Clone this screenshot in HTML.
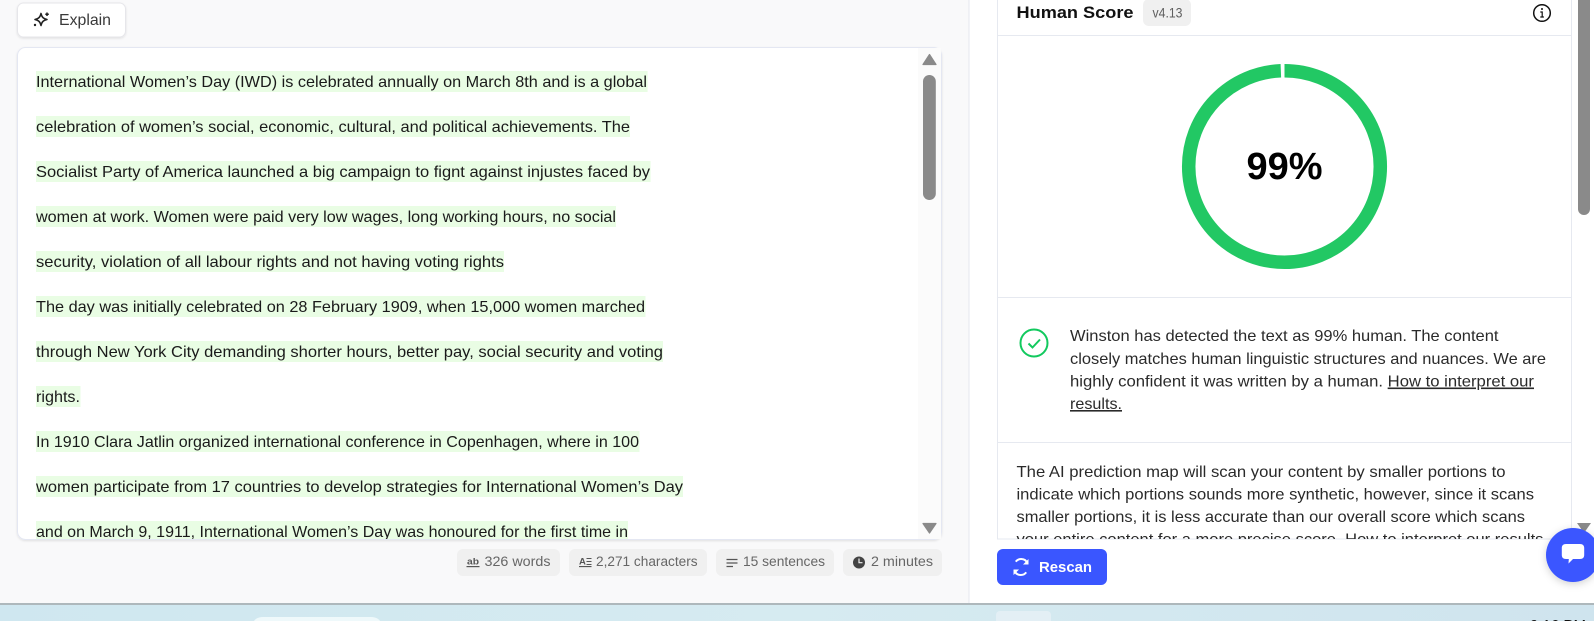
<!DOCTYPE html>
<html><head><meta charset="utf-8"><title>Human Score</title>
<style>
html,body{margin:0;padding:0;width:1594px;height:621px;overflow:hidden;background:#fff}
svg{display:block;font-family:"Liberation Sans",sans-serif}
.l{font-size:16px;fill:#1a1a1a}
.r{font-size:16px;fill:#2a2a2a}
.s{font-size:13.5px;fill:#666}
</style></head><body>
<svg width="1594" height="621" viewBox="0 0 1594 621" xmlns="http://www.w3.org/2000/svg">
<defs>
<clipPath id="c1"><rect x="17" y="47" width="924" height="492"/></clipPath>
<clipPath id="c2"><rect x="998" y="36" width="573" height="503"/></clipPath>
<linearGradient id="tb" x1="0" x2="1" y1="0" y2="0"><stop offset="0" stop-color="#cfe7f0"/><stop offset=".5" stop-color="#d6ebf1"/><stop offset="1" stop-color="#cfe4ee"/></linearGradient>
<filter id="sh" x="-20%" y="-20%" width="140%" height="140%"><feDropShadow dx="0" dy="1" stdDeviation="1" flood-color="#000" flood-opacity=".10"/></filter>
<filter id="sh2" x="-30%" y="-30%" width="160%" height="160%"><feDropShadow dx="0" dy="2" stdDeviation="4" flood-color="#000" flood-opacity=".18"/></filter>
</defs>

<!-- panels -->
<rect width="969" height="603" fill="#f9f9fa"/>
<rect x="968.500" width="1" height="603" fill="#e5e7ef"/>
<rect x="970" width="624" height="603" fill="#fff"/>

<!-- explain button -->
<rect x="17.500" y="3" width="108" height="34" rx="6" fill="#fff" stroke="#e6e6ea" filter="url(#sh)"/>
<path d="M41 13.500c.9 3.800 2.200 5.100 6 6-3.800.9-5.100 2.200-6 6-.9-3.800-2.200-5.100-6-6 3.800-.9 5.100-2.200 6-6z" fill="none" stroke="#222" stroke-width="1.600" stroke-linejoin="round"/>
<path d="M47 12.500v3.500M45.300 14.200h3.500" stroke="#222" stroke-width="1.500"/>
<circle cx="35" cy="25" r="1.200" fill="#222"/>
<text x="59" y="25" font-size="16" fill="#3a3a3a" textLength="52" lengthAdjust="spacingAndGlyphs">Explain</text>

<!-- text card -->
<rect x="17.500" y="47.500" width="924" height="492" rx="8" fill="#fff" stroke="#e4e7f2" filter="url(#sh)"/>
<g clip-path="url(#c1)">
<g fill="#e9fde4">
<rect x="36" y="71" width="611.600" height="21"/>
<rect x="36" y="116" width="594" height="21"/>
<rect x="36" y="161" width="614.600" height="21"/>
<rect x="36" y="206" width="580" height="21"/>
<rect x="36" y="251" width="468" height="21"/>
<rect x="36" y="296" width="609.500" height="21"/>
<rect x="36" y="341" width="627" height="21"/>
<rect x="36" y="386" width="44.500" height="21"/>
<rect x="36" y="431" width="603.500" height="21"/>
<rect x="36" y="476" width="647" height="21"/>
<rect x="36" y="521" width="592" height="21"/>
</g>
<text class="l" x="36" y="87" textLength="611" lengthAdjust="spacingAndGlyphs">International Women’s Day (IWD) is celebrated annually on March 8th and is a global</text>
<text class="l" x="36" y="132" textLength="594" lengthAdjust="spacingAndGlyphs">celebration of women’s social, economic, cultural, and political achievements. The</text>
<text class="l" x="36" y="177" textLength="614" lengthAdjust="spacingAndGlyphs">Socialist Party of America launched a big campaign to fignt against injustes faced by</text>
<text class="l" x="36" y="222" textLength="580" lengthAdjust="spacingAndGlyphs">women at work. Women were paid very low wages, long working hours, no social</text>
<text class="l" x="36" y="267" textLength="468" lengthAdjust="spacingAndGlyphs">security, violation of all labour rights and not having voting rights</text>
<text class="l" x="36" y="312" textLength="609" lengthAdjust="spacingAndGlyphs">The day was initially celebrated on 28 February 1909, when 15,000 women marched</text>
<text class="l" x="36" y="357" textLength="627" lengthAdjust="spacingAndGlyphs">through New York City demanding shorter hours, better pay, social security and voting</text>
<text class="l" x="36" y="402" textLength="44" lengthAdjust="spacingAndGlyphs">rights.</text>
<text class="l" x="36" y="447" textLength="603" lengthAdjust="spacingAndGlyphs">In 1910 Clara Jatlin organized international conference in Copenhagen, where in 100</text>
<text class="l" x="36" y="492" textLength="647" lengthAdjust="spacingAndGlyphs">women participate from 17 countries to develop strategies for International Women’s Day</text>
<text class="l" x="36" y="537" textLength="592" lengthAdjust="spacingAndGlyphs">and on March 9, 1911, International Women’s Day was honoured for the first time in</text>
</g>
<!-- left scrollbar -->
<rect x="918" y="48" width="23" height="491" fill="#fbfbfb"/>
<path d="M923 64.500l6.500-10 6.500 10z" fill="#8a8a8a" stroke="#8a8a8a" stroke-linejoin="round" stroke-width="1.200"/>
<rect x="923" y="75" width="12.800" height="125" rx="6.400" fill="#8a8a8a"/>
<path d="M923 523.500h13l-6.500 9.500z" fill="#8a8a8a" stroke="#8a8a8a" stroke-linejoin="round" stroke-width="1.200"/>

<!-- stat chips -->
<g fill="#f0f0f0">
<rect x="457" y="549" width="103" height="27" rx="6"/>
<rect x="569" y="549" width="138" height="27" rx="6"/>
<rect x="716" y="549" width="118" height="27" rx="6"/>
<rect x="843" y="549" width="99" height="27" rx="6"/>
</g>
<text x="467" y="564.500" font-size="9.500" font-weight="bold" fill="#555" textLength="12" lengthAdjust="spacingAndGlyphs">ab</text>
<rect x="466.500" y="566" width="13" height="1.200" fill="#555"/>
<text class="s" x="484.500" y="566" textLength="66" lengthAdjust="spacingAndGlyphs">326 words</text>
<text x="579" y="564.500" font-size="9.500" font-weight="bold" fill="#555">A</text>
<path d="M586.500 558.500h5M586.500 561.500h5M586.500 564.500h5M579 566.600h12.500" stroke="#555" stroke-width="1.100"/>
<text class="s" x="596" y="566" textLength="101.600" lengthAdjust="spacingAndGlyphs">2,271 characters</text>
<path d="M726.500 559.500h11M726.500 563h11M726.500 566.500h6.500" stroke="#555" stroke-width="1.200"/>
<text class="s" x="743" y="566" textLength="82" lengthAdjust="spacingAndGlyphs">15 sentences</text>
<circle cx="859" cy="562.500" r="6" fill="#444"/>
<path d="M859 558.500v4.200h3.500" fill="none" stroke="#f0f0f0" stroke-width="1.200"/>
<text class="s" x="871" y="566" textLength="62" lengthAdjust="spacingAndGlyphs">2 minutes</text>

<!-- right panel card -->
<rect x="997.500" y="-2" width="574" height="541" fill="#fff" stroke="#e6e9f0"/>
<text x="1016.500" y="18" font-size="17" font-weight="bold" fill="#111" textLength="117" lengthAdjust="spacingAndGlyphs">Human Score</text>
<rect x="1143" y="-1" width="48" height="27" rx="6" fill="#f0f0f0"/>
<text x="1152.500" y="17.500" font-size="13.500" fill="#5f5f5f" textLength="30" lengthAdjust="spacingAndGlyphs">v4.13</text>
<circle cx="1542" cy="13" r="8.300" fill="none" stroke="#111" stroke-width="1.500"/>
<circle cx="1542" cy="9" r="1" fill="#111"/>
<path d="M1540.300 12h1.900v5M1540.300 17h3.600" fill="none" stroke="#111" stroke-width="1.200"/>
<rect x="998" y="35" width="573" height="1" fill="#e6e9f0"/>

<!-- ring -->
<circle cx="1284.500" cy="166.500" r="95.800" fill="none" stroke="#22c864" stroke-width="13.500" stroke-dasharray="598 4" transform="rotate(-90 1284.500 166.500)"/>
<text x="1284.500" y="179" font-size="38" font-weight="bold" fill="#000" text-anchor="middle">99%</text>
<rect x="998" y="297" width="573" height="1" fill="#e6e9f0"/>

<!-- verdict -->
<circle cx="1034" cy="343" r="13.500" fill="none" stroke="#12c95e" stroke-width="2"/>
<path d="M1028.500 343.500l4 4 7.500-8" fill="none" stroke="#12c95e" stroke-width="2"/>
<text class="r" x="1070" y="341" textLength="428.500" lengthAdjust="spacingAndGlyphs">Winston has detected the text as 99% human. The content</text>
<text class="r" x="1070" y="364" textLength="476" lengthAdjust="spacingAndGlyphs">closely matches human linguistic structures and nuances. We are</text>
<text class="r" x="1070" y="386.500" textLength="464" lengthAdjust="spacingAndGlyphs">highly confident it was written by a human. <tspan text-decoration="underline">How to interpret our</tspan></text>
<text class="r" x="1070" y="409" textLength="52" lengthAdjust="spacingAndGlyphs" text-decoration="underline">results.</text>
<rect x="998" y="442" width="573" height="1" fill="#e6e9f0"/>

<g clip-path="url(#c2)">
<text class="r" x="1016.500" y="477" textLength="489" lengthAdjust="spacingAndGlyphs">The AI prediction map will scan your content by smaller portions to</text>
<text class="r" x="1016.500" y="499.500" textLength="517.500" lengthAdjust="spacingAndGlyphs">indicate which portions sounds more synthetic, however, since it scans</text>
<text class="r" x="1016.500" y="522" textLength="508.500" lengthAdjust="spacingAndGlyphs">smaller portions, it is less accurate than our overall score which scans</text>
<text class="r" x="1016.500" y="544.500" textLength="531.500" lengthAdjust="spacingAndGlyphs">your entire content for a more precise score. How to interpret our results.</text>
</g>

<!-- right scrollbar -->
<rect x="1578" y="-10" width="12" height="225" rx="6" fill="#8a8a8a"/>
<path d="M1577 523h14l-7 10z" fill="#8a8a8a"/>

<!-- rescan -->
<rect x="997" y="549" width="110" height="36" rx="6" fill="#3a56ff"/>
<path d="M1027.500 563.500c-1-2.800-3.400-4.500-6.300-4.500-2.300 0-4.200 1-5.400 2.700M1014.500 570.500c1 2.800 3.400 4.500 6.300 4.500 2.300 0 4.200-1 5.400-2.700" fill="none" stroke="#fff" stroke-width="2"/>
<path d="M1028.500 559v5.500h-5.500zM1013.500 575v-5.500h5.500z" fill="#fff"/>
<text x="1039" y="572" font-size="15" font-weight="bold" fill="#fff" textLength="53" lengthAdjust="spacingAndGlyphs">Rescan</text>

<!-- chat -->
<circle cx="1573" cy="555" r="27" fill="#3a56ff" filter="url(#sh2)"/>
<path d="M1566 544h14c2.800 0 4.200 1.500 4.200 4v7c0 2.500-1.400 4-4.200 4h-7l-4.500 4.500.3-4.500h-2.800c-2.800 0-4.200-1.500-4.200-4v-7c0-2.500 1.400-4 4.200-4z" fill="#fff"/>

<!-- taskbar -->
<rect y="603" width="1594" height="18" fill="url(#tb)"/>
<rect y="603" width="1594" height="2" fill="#aeb8bc"/>
<rect x="253" y="617" width="128" height="14" rx="10" fill="#eff9fb"/>
<rect x="996" y="611" width="55" height="14" rx="4" fill="#e3eff5"/>
<text x="1530" y="630" font-size="15" fill="#111" textLength="56" lengthAdjust="spacingAndGlyphs">9:16 PM</text>
</svg>
</body></html>
